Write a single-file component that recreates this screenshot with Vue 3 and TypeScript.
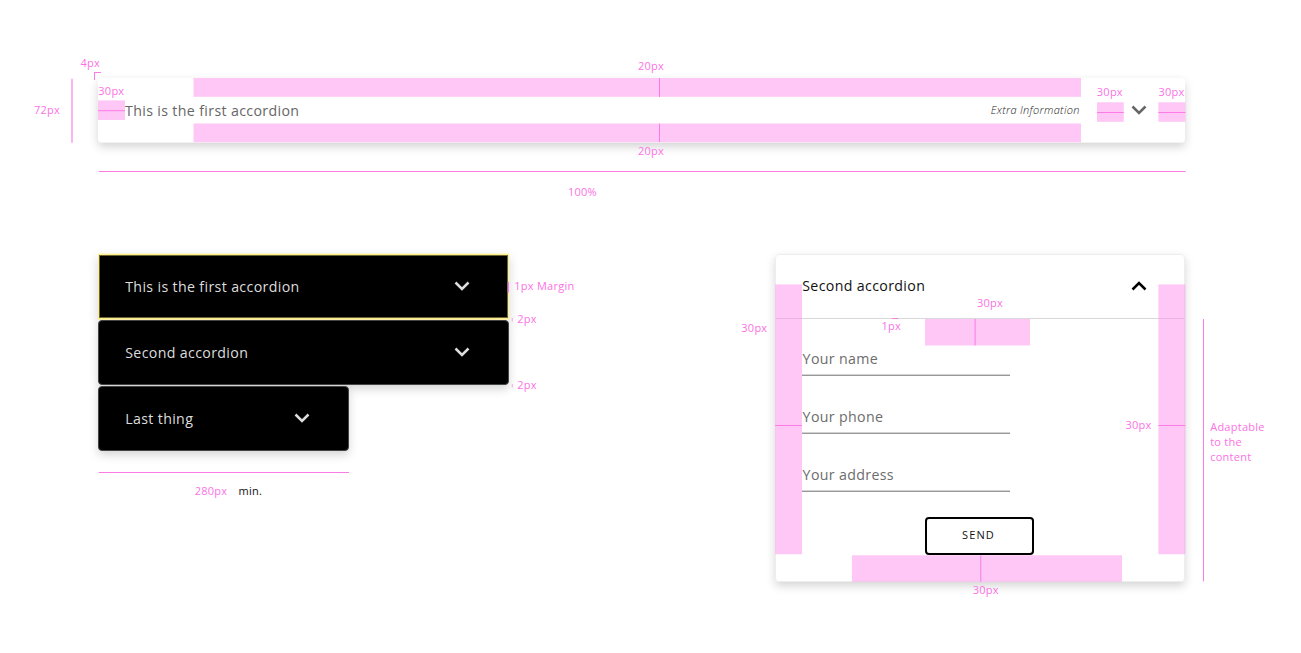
<script setup lang="ts">
interface Label { x: number; y: number; text: string }
interface Area { x: number; y: number; w: number; h: number }

const items = [
  { title: 'This is the first accordion', state: 'focused' },
  { title: 'Second accordion', state: 'regular' },
  { title: 'Last thing', state: 'compact' },
]
const fields = ['Your name', 'Your phone', 'Your address']

const areas: Area[] = [
  { x: 193.5, y: 78, w: 887.5, h: 18.8 },
  { x: 193.5, y: 123.5, w: 887.5, h: 18.7 },
  { x: 98, y: 100.4, w: 27, h: 19.6 },
  { x: 1097, y: 102.3, w: 26.7, h: 19.5 },
  { x: 1158.4, y: 102.3, w: 27, h: 19.5 },
  { x: 775.2, y: 284.4, w: 26.8, h: 269.8 },
  { x: 1158.4, y: 284.4, w: 27, h: 269.8 },
  { x: 925, y: 319, w: 105, h: 26.5 },
  { x: 852, y: 555.3, w: 270, h: 26.5 },
]
const ticks: Area[] = [
  { x: 659, y: 78, w: 1, h: 19 },
  { x: 659, y: 123.5, w: 1, h: 18.5 },
  { x: 98, y: 110.2, w: 27, h: 1 },
  { x: 1097, y: 112, w: 26.7, h: 1 },
  { x: 1158.4, y: 112, w: 27, h: 1 },
  { x: 775.2, y: 425, w: 26.8, h: 1 },
  { x: 1158.4, y: 425, w: 27, h: 1 },
  { x: 974.6, y: 319, w: 1, h: 26.5 },
  { x: 980.3, y: 555.3, w: 1, h: 26.5 },
  { x: 98.7, y: 171, w: 1087, h: 1 },
  { x: 98.7, y: 472, w: 250.3, h: 1 },
  { x: 1203, y: 319, w: 1, h: 262.4 },
  { x: 94, y: 72, w: 7, h: 1 },
  { x: 94, y: 72, w: 1, h: 8 },
  { x: 892, y: 318, w: 6, h: 1 },
  { x: 507.7, y: 282, w: 1.3, h: 10.5 },
]
const faintTicks: Area[] = [
  { x: 71, y: 78.7, w: 2, h: 64 },
  { x: 511.7, y: 318, w: 1.3, h: 3.4 },
  { x: 511.7, y: 384, w: 1.3, h: 3.4 },
]
const labels: Label[] = [
  { x: 34, y: 114, text: '72px' },
  { x: 80.5, y: 67, text: '4px' },
  { x: 98.3, y: 95, text: '30px' },
  { x: 637.9, y: 70, text: '20px' },
  { x: 637.9, y: 155, text: '20px' },
  { x: 1096.8, y: 96, text: '30px' },
  { x: 1158.5, y: 96, text: '30px' },
  { x: 568, y: 196, text: '100%' },
  { x: 514.3, y: 290, text: '1px Margin' },
  { x: 517.2, y: 323, text: '2px' },
  { x: 517.2, y: 389, text: '2px' },
  { x: 194.7, y: 495, text: '280px' },
  { x: 741.3, y: 332, text: '30px' },
  { x: 881.4, y: 330, text: '1px' },
  { x: 977, y: 307, text: '30px' },
  { x: 1125.4, y: 429, text: '30px' },
  { x: 972.7, y: 594, text: '30px' },
  { x: 1210.2, y: 431, text: 'Adaptable' },
  { x: 1210.2, y: 446, text: 'to the' },
  { x: 1210.2, y: 461, text: 'content' },
]
</script>

<template>
  <main class="spec">
    <section class="bar">
      <span class="title">This is the first accordion</span>
      <em class="extra">Extra Information</em>
      <svg class="chevron" viewBox="0 0 16 10"><path d="M1.5 1.5 8 8 14.5 1.5" /></svg>
    </section>

    <div class="examples">
      <div class="stack">
        <section v-for="item in items" :key="item.title" class="item" :class="item.state">
          <span class="title">{{ item.title }}</span>
          <svg class="chevron" viewBox="0 0 16 10"><path d="M1.5 1.5 8 8 14.5 1.5" /></svg>
        </section>
      </div>

      <section class="panel">
        <header class="panel-head">
          <span class="title">Second accordion</span>
          <svg class="chevron" viewBox="0 0 16 10"><path d="M1.5 8.5 8 2 14.5 8.5" /></svg>
        </header>
        <form class="form">
          <div v-for="field in fields" :key="field" class="field">{{ field }}</div>
          <button type="button" class="send">SEND</button>
        </form>
      </section>
    </div>

    <svg class="redlines" width="1301" height="653" viewBox="0 0 1301 653">
      <rect v-for="(a, i) in areas" :key="'a' + i" class="area" :x="a.x" :y="a.y" :width="a.w" :height="a.h" />
      <rect v-for="(t, i) in ticks" :key="'t' + i" class="tick" :x="t.x" :y="t.y" :width="t.w" :height="t.h" />
      <rect v-for="(t, i) in faintTicks" :key="'f' + i" class="faint" :x="t.x" :y="t.y" :width="t.w" :height="t.h" />
      <text v-for="(l, i) in labels" :key="'l' + i" :x="l.x" :y="l.y">{{ l.text }}</text>
      <text class="dark" x="238.5" y="495">min.</text>
    </svg>
  </main>
</template>

<style>
body { margin: 0; background: #fff; }
</style>

<style scoped>
.spec {
  position: relative;
  box-sizing: border-box;
  width: 1301px;
  height: 653px;
  padding: 78px 116px 0 98px;
  overflow: hidden;
  font-family: "Open Sans", "Noto Sans", sans-serif;
  font-size: 14.2px;
  letter-spacing: 0.35px;
  line-height: 20px;
}
.bar, .item, .panel { border-radius: 4px; box-shadow: 0 4px 10px rgba(0, 0, 0, 0.17); }
.bar {
  display: flex;
  align-items: center;
  box-sizing: border-box;
  height: 65px;
  padding: 1px 38px 0 27px;
  border-bottom: 1px solid #f3f3f3;
  color: #666;
}
.bar .chevron { margin-top: -1px; }
.extra {
  margin: -2px 51.3px 0 auto;
  font-size: 11px;
  font-weight: 300;
  letter-spacing: 0.3px;
  color: #222;
}
.chevron { width: 16px; height: 10px; flex: none; fill: none; stroke: currentColor; stroke-width: 2.5; }
.examples { display: flex; justify-content: space-between; align-items: flex-start; margin-top: 111px; }
.stack { display: flex; flex-direction: column; gap: 1px; }
.item {
  display: flex;
  align-items: center;
  justify-content: space-between;
  box-sizing: border-box;
  width: 411px;
  height: 65px;
  padding: 0 37.7px 0 26.2px;
  border: 1px solid #444;
  background: #000;
  color: #ddd;
}
.item .title { padding-top: 1px; }
.item .chevron { margin-top: -2px; }
.focused {
  border-radius: 0;
  border-color: #fff08c;
  box-shadow: inset 0 0 0 1px #6b6638, 0 1px 0 #fff3ac, 0 -1px 0 #fff8cc, 0 4px 10px rgba(0, 0, 0, 0.17);
}
.compact { width: 251px; }
.panel { width: 410px; height: 328px; box-sizing: border-box; border: 1px solid #eee; }
.panel-head {
  display: flex;
  align-items: center;
  justify-content: space-between;
  box-sizing: border-box;
  height: 64px;
  padding: 0 37px 0 26.2px;
  border-bottom: 1px solid #d8d8d8;
  color: #000;
}
.panel-head .title { padding-bottom: 1px; color: #111; }
.panel-head .chevron { margin-top: -1px; }
.form { display: flex; flex-direction: column; padding: 26px 0 0 26px; }
.field {
  box-sizing: border-box;
  width: 208px;
  height: 31px;
  padding: 4px 0 0 0.6px;
  margin-bottom: 27px;
  border-bottom: 1px solid #999;
  box-shadow: 0 -1px 0 #d2d2d2 inset;
  color: #6c6c6c;
}
.send {
  box-sizing: border-box;
  width: 109px;
  height: 38px;
  margin: -2px 0 0 123px;
  padding: 0 2px 3px 0;
  border: 2px solid #000;
  border-radius: 4px;
  background: #fff;
  color: #111;
  font: 11px "Open Sans", sans-serif;
  letter-spacing: 1.1px;
}
.redlines { position: absolute; left: 0; top: 0; font-size: 11px; letter-spacing: 0.25px; }
.redlines text { fill: #fb72e5; }
.redlines .dark { fill: #111; }
.area { fill: #fe90ee; fill-opacity: 0.5; }
.tick { fill: #fb7ce6; }
.faint { fill: #ffb4f2; }
</style>
